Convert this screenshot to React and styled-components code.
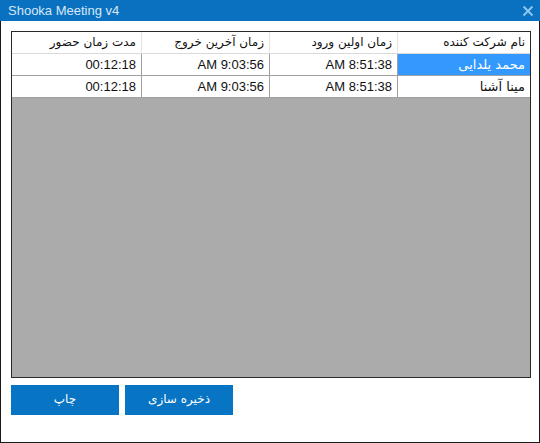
import React from "react";
import styled, { createGlobalStyle } from "styled-components";

const GlobalStyle = createGlobalStyle`
    html, body {
        margin: 0;
        padding: 0;
        background: #fff;
    }
    * {
        box-sizing: border-box;
    }
`;

const Window = styled.div`
    width: 540px;
    height: 443px;
    display: flex;
    flex-direction: column;
    font-family: "Liberation Sans", "DejaVu Sans", sans-serif;
    background: #fff;
`;

const TitleBar = styled.div`
    height: 21px;
    flex: none;
    display: flex;
    align-items: center;
    justify-content: space-between;
    padding: 0 6px 0 8px;
    background-color: #0a71c0;
    color: #d6e8f6;
    font-size: 13px;
`;

const CloseIcon = styled.svg`
    width: 12px;
    height: 12px;
    display: block;
`;

const Body = styled.div`
    flex: 1;
    display: flex;
    flex-direction: column;
    gap: 7px;
    padding: 10px 8px 0 10px;
    border: 1px solid #1a1a1a;
    border-top: none;
`;

const Grid = styled.div`
    height: 347px;
    flex: none;
    border: 1px solid #2a2a2a;
    background-color: #ababab;
    direction: rtl;
`;

const Row = styled.div`
    display: grid;
    grid-template-columns: 133px 128px 128px 1fr;
    height: 22px;
    background-color: #fff;
    border-bottom: 1px solid ${(p) => (p.$header ? "#dadada" : "#a0a0a0")};
`;

const Cell = styled.div`
    display: flex;
    align-items: center;
    padding: 0 5px 1px 4px;
    white-space: nowrap;
    overflow: hidden;
    color: ${(p) => (p.$selected ? "#fff" : "#111")};
    background-color: ${(p) => (p.$selected ? "#3399ff" : "transparent")};
    border-left: 1px solid ${(p) => (p.$header ? "#e2e2e2" : "#a0a0a0")};
    font-size: ${(p) => (p.$header ? "12px" : "13px")};
    font-family: ${(p) =>
        p.$fa ? '"DejaVu Sans", sans-serif' : '"Liberation Sans", "DejaVu Sans", sans-serif'};

    &:last-child {
        border-left: none;
    }
`;

const Actions = styled.div`
    display: flex;
    gap: 6px;
`;

const Button = styled.button`
    width: 108px;
    height: 30px;
    border: none;
    background-color: #0874c4;
    color: #fff;
    font-family: "DejaVu Sans", sans-serif;
    font-size: 12px;
    padding: 0 0 3px;
    cursor: pointer;
`;

const columns = ["نام شرکت کننده", "زمان اولین ورود", "زمان آخرین خروج", "مدت زمان حضور"];

const rows = [
    { name: "محمد یلدایی", enter: "8:51:38 AM", exit: "9:03:56 AM", duration: "00:12:18", selected: true },
    { name: "مینا آشنا", enter: "8:51:38 AM", exit: "9:03:56 AM", duration: "00:12:18" },
];

const App = () => {
    return (
        <>
            <GlobalStyle />
            <Window>
                <TitleBar>
                    <span>Shooka Meeting v4</span>
                    <CloseIcon viewBox="0 0 12 12">
                        <path d="M1.5 1.5 L10.5 10.5 M10.5 1.5 L1.5 10.5" stroke="#8cc6ef" strokeWidth="2" />
                    </CloseIcon>
                </TitleBar>
                <Body>
                    <Grid>
                        <Row $header>
                            {columns.map((c) => (
                                <Cell key={c} $header $fa>{c}</Cell>
                            ))}
                        </Row>
                        {rows.map((r) => (
                            <Row key={r.name}>
                                <Cell $fa $selected={r.selected}>{r.name}</Cell>
                                <Cell>{r.enter}</Cell>
                                <Cell>{r.exit}</Cell>
                                <Cell>{r.duration}</Cell>
                            </Row>
                        ))}
                    </Grid>
                    <Actions>
                        <Button>چاپ</Button>
                        <Button>ذخیره سازی</Button>
                    </Actions>
                </Body>
            </Window>
        </>
    );
};

export default App;
